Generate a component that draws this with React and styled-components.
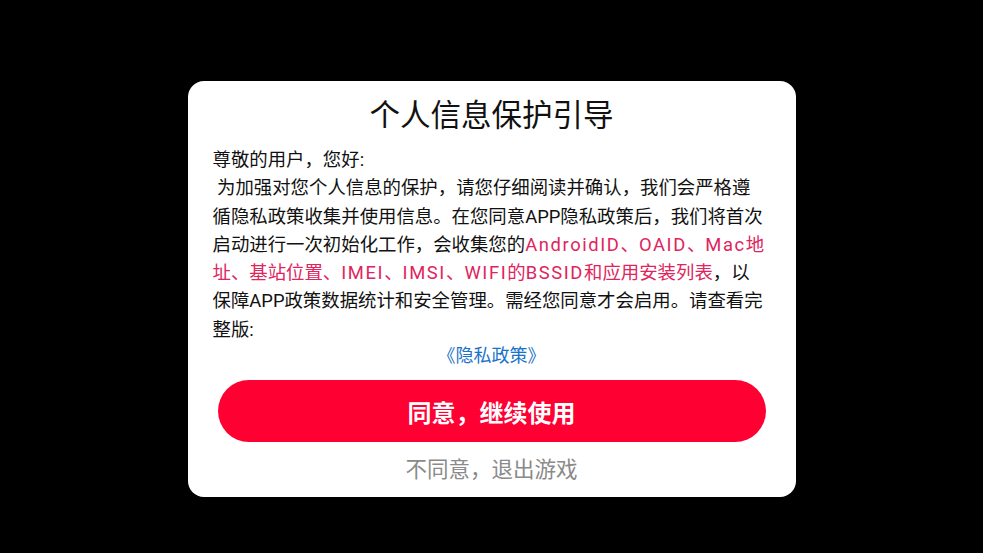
import React from "react";
import styled, { createGlobalStyle } from "styled-components";

const GlobalStyle = createGlobalStyle`
  html, body {
    margin: 0;
    padding: 0;
    background: #000;
  }
  body {
    font-family: Roboto, "Noto Sans CJK SC", sans-serif;
  }
`;

const Screen = styled.div`
  width: 983px;
  height: 553px;
  box-sizing: border-box;
  padding-top: 25px;
  display: flex;
  align-items: center;
  justify-content: center;
  background: #000;
`;

const Dialog = styled.div`
  width: 608px;
  height: 416px;
  box-sizing: border-box;
  padding: 15px 25px 14px;
  background: #fff;
  border-radius: 16px;
  display: flex;
  flex-direction: column;
`;

const Title = styled.h1`
  margin: 0;
  font-size: 30.5px;
  font-weight: 400;
  line-height: 40px;
  color: #111;
  text-align: center;
`;

const Body = styled.div`
  margin-top: 10px;
  font-size: 18.4px;
  line-height: 28.3px;
  color: #111;
  white-space: nowrap;
`;

const Para = styled.p`
  margin: 0;
  white-space: pre;
`;

const Highlight = styled.span`
  color: #e0245e;
`;

const Latin = styled.span`
  letter-spacing: 1.6px;
`;

const PolicyLink = styled.a`
  display: block;
  font-size: 18px;
  line-height: 24px;
  color: #1a73c8;
  text-align: center;
  text-decoration: none;
  cursor: pointer;
`;

const Actions = styled.div`
  margin-top: 12px;
  padding: 0 5px;
  display: flex;
  flex-direction: column;
  align-items: stretch;
`;

const AgreeButton = styled.button`
  height: 62px;
  border: none;
  border-radius: 31px;
  background: #ff0033;
  color: #fff;
  font-family: inherit;
  font-size: 24px;
  font-weight: 700;
  cursor: pointer;
`;

const DeclineButton = styled.button`
  margin-top: 13px;
  height: 30px;
  padding: 0;
  border: none;
  background: none;
  color: #8a8a8a;
  font-family: inherit;
  font-size: 21.5px;
  line-height: 30px;
  cursor: pointer;
`;

export default function App() {
  return (
    <>
      <GlobalStyle />
      <Screen>
        <Dialog>
          <Title>个人信息保护引导</Title>
          <Body>
            <Para>尊敬的用户，您好:</Para>
            <Para>
              {" 为加强对您个人信息的保护，请您仔细阅读并确认，我们会严格遵"}
              <br />
              循隐私政策收集并使用信息。在您同意APP隐私政策后，我们将首次
              <br />
              启动进行一次初始化工作，会收集您的
              <Highlight>
                <Latin>AndroidID</Latin>、<Latin>OAID</Latin>、<Latin>Mac</Latin>地
                <br />
                址、基站位置、<Latin>IMEI</Latin>、<Latin>IMSI</Latin>、
                <Latin>WIFI</Latin>的<Latin>BSSID</Latin>和应用安装列表
              </Highlight>
              ，以
              <br />
              保障APP政策数据统计和安全管理。需经您同意才会启用。请查看完
              <br />
              整版:
            </Para>
          </Body>
          <PolicyLink>《隐私政策》</PolicyLink>
          <Actions>
            <AgreeButton>同意，继续使用</AgreeButton>
            <DeclineButton>不同意，退出游戏</DeclineButton>
          </Actions>
        </Dialog>
      </Screen>
    </>
  );
}
